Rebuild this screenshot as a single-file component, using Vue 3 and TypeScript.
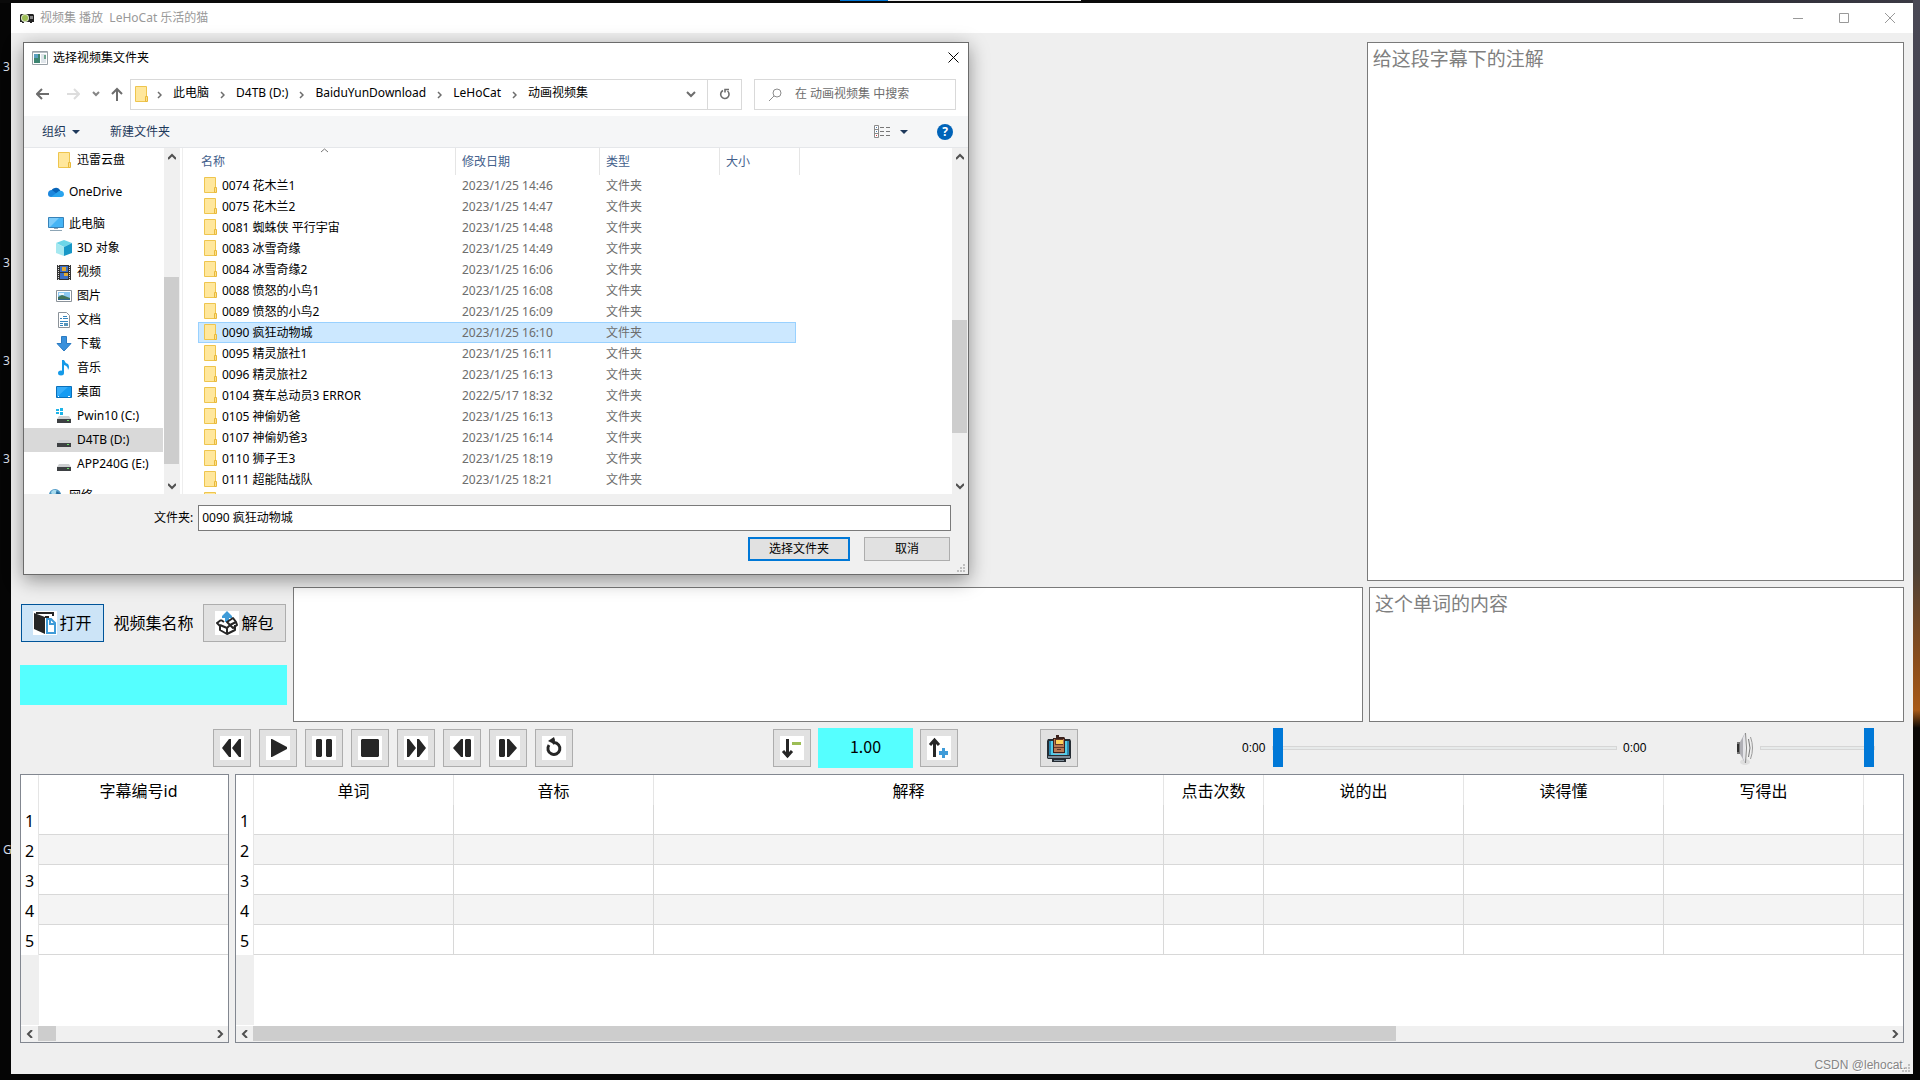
<script setup lang="ts">
import { ref } from 'vue'

interface Folder {
  name: string
  date: string
}
interface Place {
  label: string
  icon: string
  level: number
  gap?: boolean
}

const folders: Folder[] = [
  { name: '0074 花木兰1', date: '2023/1/25 14:46' },
  { name: '0075 花木兰2', date: '2023/1/25 14:47' },
  { name: '0081 蜘蛛侠 平行宇宙', date: '2023/1/25 14:48' },
  { name: '0083 冰雪奇缘', date: '2023/1/25 14:49' },
  { name: '0084 冰雪奇缘2', date: '2023/1/25 16:06' },
  { name: '0088 愤怒的小鸟1', date: '2023/1/25 16:08' },
  { name: '0089 愤怒的小鸟2', date: '2023/1/25 16:09' },
  { name: '0090 疯狂动物城', date: '2023/1/25 16:10' },
  { name: '0095 精灵旅社1', date: '2023/1/25 16:11' },
  { name: '0096 精灵旅社2', date: '2023/1/25 16:13' },
  { name: '0104 赛车总动员3 ERROR', date: '2022/5/17 18:32' },
  { name: '0105 神偷奶爸', date: '2023/1/25 16:13' },
  { name: '0107 神偷奶爸3', date: '2023/1/25 16:14' },
  { name: '0110 狮子王3', date: '2023/1/25 18:19' },
  { name: '0111 超能陆战队', date: '2023/1/25 18:21' },
]

const places: Place[] = [
  { label: '迅雷云盘', icon: 'folder', level: 2 },
  { label: 'OneDrive', icon: 'cloud', level: 1, gap: true },
  { label: '此电脑', icon: 'pc', level: 1, gap: true },
  { label: '3D 对象', icon: 'cube', level: 2 },
  { label: '视频', icon: 'film', level: 2 },
  { label: '图片', icon: 'picture', level: 2 },
  { label: '文档', icon: 'doc', level: 2 },
  { label: '下载', icon: 'download', level: 2 },
  { label: '音乐', icon: 'music', level: 2 },
  { label: '桌面', icon: 'desktop', level: 2 },
  { label: 'Pwin10 (C:)', icon: 'windrive', level: 2 },
  { label: 'D4TB (D:)', icon: 'drive', level: 2 },
  { label: 'APP240G (E:)', icon: 'drive', level: 2 },
  { label: '网络', icon: 'network', level: 1, gap: true },
]

const crumbs = ['此电脑', 'D4TB (D:)', 'BaiduYunDownload', 'LeHoCat', '动画视频集']

const transport = [
  { label: '快退', d: 'M2 12l7-9h2v18H9zM12 12l7-9h2v18h-2z' },
  { label: '播放', d: 'M5 3h1l15 8v2L6 21H5z' },
  { label: '暂停', d: 'M4 4l1-1h4l1 1v16l-1 1H5l-1-1zM14 4l1-1h4l1 1v16l-1 1h-4l-1-1z' },
  { label: '停止', d: 'M4 3h16l1 1v16l-1 1H4l-1-1V4z' },
  { label: '快进', d: 'M3 3h2l7 9-7 9H3zM13 3h2l7 9-7 9h-2z' },
  { label: '上一句', d: 'M3 12l8-9h2v18h-2zM15 4l1-1h4l1 1v16l-1 1h-4l-1-1z' },
  { label: '下一句', d: 'M3 4l1-1h4l1 1v16l-1 1H4l-1-1zM11 3h2l8 9-8 9h-2z' },
]

const wordColumns = ['单词', '音标', '解释', '点击次数', '说的出', '读得懂', '写得出', '']

const selected = ref('0090 疯狂动物城')
const note = ref('')
const subtitle = ref('')
const word = ref('')
const progress = ref(0)
const volume = ref(100)
</script>

<template>
  <div class="desktop">
    <span class="shortcut s1">3</span>
    <span class="shortcut s2">3</span>
    <span class="shortcut s3">3</span>
    <span class="shortcut s4">3</span>
    <span class="shortcut s5">G</span>
    <i class="peek"></i>

    <div class="window">
      <header class="titlebar">
        <svg class="app-icon" width="14" height="12" viewBox="0 0 14 12">
          <path fill="#222" d="M1 2h12l1 1v7h-2v1h-2v-1H4v1H2v-1H0V3z" />
          <circle cx="5" cy="6" r="4" fill="#dfe8cd" />
          <circle cx="5" cy="6" r="3" fill="#9cbd55" />
          <path fill="#888" d="M10 4h3v3h-3z" />
        </svg>
        <h1>视频集 播放&nbsp; LeHoCat 乐活的猫</h1>
        <button class="win-btn" aria-label="最小化">
          <svg width="10" height="10"><path d="M0 5.500h10" stroke="#999" /></svg>
        </button>
        <button class="win-btn" aria-label="最大化">
          <svg width="10" height="10"><path d="M.5.5h9v9h-9z" fill="none" stroke="#999" /></svg>
        </button>
        <button class="win-btn" aria-label="关闭">
          <svg width="10" height="10"><path d="M0 0l10 10M10 0L0 10" stroke="#999" /></svg>
        </button>
      </header>

      <main class="body">
        <section class="top">
          <div class="video"></div>
          <textarea v-model="note" class="box" aria-label="注解" placeholder="给这段字幕下的注解"></textarea>
        </section>

        <section class="middle">
          <div class="source">
            <div class="source-row">
              <button class="tool open">
                <svg class="chip" width="24" height="24" viewBox="0 0 24 24">
                  <path fill="#262626" d="M1 2l11 4v17L1 18z" />
                  <path fill="none" stroke="#262626" stroke-width="2" d="M3 2h17v3M12 6h4" />
                  <path fill="#fff" stroke="#3f9bd8" stroke-width="2" d="M14 22V8h4l4 4v10h-9M17 8v5h5" />
                </svg>
                打开
              </button>
              <span class="source-name">视频集名称</span>
              <button class="tool">
                <svg class="chip" width="24" height="24" viewBox="0 0 24 24">
                  <path fill="#3f9bd8" d="M12 0l5 5v2h-3v4h-4V7H7V5z" />
                  <path fill="none" stroke="#262626" stroke-width="2" stroke-linejoin="round" d="M6 9l-4 3 3 3v4l7 4 8-4v-5M5 14l7 3 3-3M12 17v6M6 9l3 2M15 14l6-3-3-4-6 4zM15 14l3 3 4-3-1-3" />
                </svg>
                解包
              </button>
            </div>
            <output class="source-output"></output>
          </div>
          <textarea v-model="subtitle" class="box" aria-label="字幕"></textarea>
          <textarea v-model="word" class="box" aria-label="单词" placeholder="这个单词的内容"></textarea>
        </section>

        <section class="controls">
          <div class="transport">
            <button v-for="t in transport" :key="t.label" class="tool square" :aria-label="t.label">
              <svg class="chip" width="24" height="24" viewBox="0 0 24 24"><path fill="#262626" :d="t.d" /></svg>
            </button>
            <button class="tool square" aria-label="重播">
              <svg class="chip" width="24" height="24" viewBox="0 0 24 24">
                <path fill="none" stroke="#262626" stroke-width="3" d="M12 6.500a6 6 0 1 1-5 2.500" />
                <path fill="#262626" d="M6 5l6-4 1 3-1 5-2-2z" />
              </svg>
            </button>
          </div>
          <div class="speed">
            <button class="tool square" aria-label="减速">
              <svg class="chip" width="24" height="24" viewBox="0 0 24 24">
                <path fill="none" stroke="#262626" stroke-width="3" d="M7.500 3v18M3 15l4.500 5 4.500-5" />
                <path fill="#9cbd55" d="M12 6h9v3h-9z" />
              </svg>
            </button>
            <output class="rate">1.00</output>
            <button class="tool square" aria-label="加速">
              <svg class="chip" width="24" height="24" viewBox="0 0 24 24">
                <path fill="none" stroke="#262626" stroke-width="3" d="M7.500 21V4M3 9l4.500-5L12 9" />
                <path fill="#3f9bd8" d="M15 12h3v3h3v4h-3v3h-3v-3h-3v-4h3z" />
              </svg>
            </button>
          </div>
          <button class="tool square tv" aria-label="投屏">
            <svg width="26" height="28" viewBox="0 0 26 28">
              <path fill="#252c33" d="M2 5h22l1 2v17l-1 1h-4v3H6v-3H2l-1-1V7z" />
              <path fill="#7c8b97" d="M2 22h22v2H2zM8 26h10v1H8z" />
              <path fill="#51cdea" d="M4 7h18v14H4z" />
              <path fill="#2d86ad" d="M3 7h2v14H3zM21 7h2v14h-2z" />
              <path fill="#3a211c" d="M10 1h3v2h5l1 1v15h-1v1H8v-1H7V4h3z" />
              <path fill="#b97952" d="M8 5h10v13H8z" />
              <path fill="#633826" d="M9 5h8v6H9zM8 13h10v1H8zM11 15h4v1h-4z" />
              <path fill="#ffd158" d="M10 6h7v4h-7z" />
              <path fill="#9aa9b5" d="M8 19h10v1H8z" />
            </svg>
          </button>
          <label class="time" for="progress">0:00</label>
          <input id="progress" v-model="progress" class="slider progress" type="range" min="0" max="100" />
          <span class="time end">0:00</span>
          <label class="speaker" for="volume" aria-label="音量">
            <svg width="18" height="36" viewBox="0 0 18 36">
              <ellipse cx="9" cy="32" rx="5" ry="3" fill="#dedede" />
              <path fill="#777" d="M1 12h4v12H1z" />
              <path fill="#303030" d="M1 14h2v8H1z" />
              <path fill="#b0b0b6" d="M4 12l5-9v30l-5-9z" />
              <path fill="#e4e4e8" d="M7 8l2-5v30l-2-5z" />
              <path fill="none" stroke="#888" d="M9.500 3q2 15 0 30" />
              <path fill="none" stroke="#777" d="M12.500 9q3 9 0 18" />
              <path fill="none" stroke="#9a9a9a" d="M14.500 7q4 11 0 22" />
            </svg>
          </label>
          <input id="volume" v-model="volume" class="slider volume" type="range" min="0" max="100" />
        </section>

        <section class="tables">
          <div class="grid-box ids">
            <div class="grid-view">
              <table class="grid">
                <colgroup><col class="c-num" /><col /></colgroup>
                <thead><tr><th></th><th>字幕编号id</th></tr></thead>
                <tbody>
                  <tr v-for="n in 5" :key="n"><th>{{ n }}</th><td></td></tr>
                </tbody>
              </table>
              <i class="gutter"></i>
            </div>
            <div class="hscroll">
              <button aria-label="向左"><svg width="8" height="8" viewBox="0 0 8 8"><path d="M6 0L2 4l4 4" /></svg></button>
              <div class="htrack"><i class="hthumb short"></i></div>
              <button aria-label="向右"><svg width="8" height="8" viewBox="0 0 8 8"><path d="M2 0l4 4-4 4" /></svg></button>
            </div>
          </div>
          <div class="grid-box words">
            <div class="grid-view">
              <table class="grid">
                <colgroup>
                  <col class="c-num" /><col class="c-mid" /><col class="c-mid" /><col />
                  <col class="c-small" /><col class="c-mid" /><col class="c-mid" /><col class="c-mid" /><col class="c-rest" />
                </colgroup>
                <thead><tr><th></th><th v-for="c in wordColumns" :key="c">{{ c }}</th></tr></thead>
                <tbody>
                  <tr v-for="n in 5" :key="n"><th>{{ n }}</th><td v-for="c in wordColumns" :key="c"></td></tr>
                </tbody>
              </table>
              <i class="gutter"></i>
            </div>
            <div class="hscroll">
              <button aria-label="向左"><svg width="8" height="8" viewBox="0 0 8 8"><path d="M6 0L2 4l4 4" /></svg></button>
              <div class="htrack"><i class="hthumb long"></i></div>
              <button aria-label="向右"><svg width="8" height="8" viewBox="0 0 8 8"><path d="M2 0l4 4-4 4" /></svg></button>
            </div>
          </div>
        </section>
      </main>

      <footer class="status">
        <span>CSDN @lehocat.</span>
        <i class="grip"></i>
      </footer>
    </div>

    <div class="dialog" role="dialog" aria-labelledby="dialog-title">
      <header class="dialog-title">
        <svg width="16" height="14" viewBox="0 0 16 14">
          <path fill="#fff" stroke="#98a0a6" d="M.5.5h15v13H.5z" />
          <path fill="#b9c0c6" d="M1 1h14v1H1z" />
          <path fill="#3d8571" d="M2 3h6v9H2z" />
          <path fill="#5a9fc0" d="M2 3h4v4H2z" />
          <path fill="#dfe5ea" d="M9 3h5v9H9z" />
          <path fill="#6da58e" d="M12 4h2v4h-2z" />
        </svg>
        <h2 id="dialog-title">选择视频集文件夹</h2>
        <button class="dialog-close" aria-label="关闭">
          <svg width="11" height="11"><path d="M.5.5l10 10M10.500.5l-10 10" stroke="#000" /></svg>
        </button>
      </header>

      <nav class="nav">
        <button class="nav-btn" aria-label="后退">
          <svg width="14" height="14" viewBox="0 0 14 14"><path d="M13 7H2M6 2L1 7l5 5" stroke="#6d6d6d" stroke-width="2" fill="none" /></svg>
        </button>
        <button class="nav-btn" aria-label="前进">
          <svg width="14" height="14" viewBox="0 0 14 14"><path d="M1 7h11M8 2l5 5-5 5" stroke="#ddd" stroke-width="2" fill="none" /></svg>
        </button>
        <button class="nav-btn recent" aria-label="最近位置">
          <svg width="8" height="6" viewBox="0 0 8 6"><path d="M1 1l3 3 3-3" stroke="#858585" stroke-width="2" fill="none" /></svg>
        </button>
        <button class="nav-btn up" aria-label="向上">
          <svg width="14" height="14" viewBox="0 0 14 14"><path d="M7 14V2M2 7l5-5 5 5" stroke="#6d6d6d" stroke-width="2" fill="none" /></svg>
        </button>
        <div class="address">
          <svg class="folder" width="14" height="17" viewBox="0 0 14 17">
            <path fill="#ffe79c" stroke="#eec54e" d="M.5.5h11v15H.5z" /><path fill="#ffe08a" stroke="#e8b93b" d="M10.500 10.500h2v5h-2z" />
          </svg>
          <template v-for="c in crumbs" :key="c">
            <svg class="crumb-sep" width="5" height="8" viewBox="0 0 5 8"><path d="M1 1l3 3-3 3" stroke="#6d6d6d" stroke-width="1.500" fill="none" /></svg>
            <a href="#">{{ c }}</a>
          </template>
          <button class="drop" aria-label="历史位置">
            <svg width="10" height="7" viewBox="0 0 10 7"><path d="M1 1l4 4 4-4" stroke="#6d6d6d" stroke-width="2" fill="none" /></svg>
          </button>
          <button class="refresh" aria-label="刷新">
            <svg width="12" height="12" viewBox="0 0 12 12"><path d="M4 2.500a4.200 4.200 0 1 0 4.500.5M6 4.500V1.500h4" stroke="#6d6d6d" stroke-width="1.600" fill="none" /></svg>
          </button>
        </div>
        <label class="search">
          <svg width="13" height="13" viewBox="0 0 13 13"><circle cx="8" cy="5" r="4" fill="none" stroke="#8c8c8c" /><path d="M5 8l-5 5" stroke="#8c8c8c" /></svg>
          <input type="text" aria-label="搜索" placeholder="在 动画视频集 中搜索" />
        </label>
      </nav>

      <div class="toolbar">
        <button class="menu">组织<i class="caret"></i></button>
        <button class="menu">新建文件夹</button>
        <button class="view" aria-label="更改视图">
          <svg width="17" height="13" viewBox="0 0 17 13">
            <path fill="#fff" stroke="#8a8a8a" d="M.5.5h4v12h-4zM.5 4.500h4M.5 8.500h4" />
            <path fill="#4d82b8" d="M2 2h1v1H2zM2 6h1v1H2z" /><path fill="#d33" d="M2 10h1v1H2z" />
            <path stroke="#777" d="M6 2.500h4M12 2.500h4M6 6.500h4M12 6.500h4M6 10.500h4M12 10.500h4" />
          </svg>
          <i class="caret"></i>
        </button>
        <button class="help" aria-label="帮助">?</button>
      </div>

      <div class="explorer">
        <ul class="places">
          <li v-for="p in places" :key="p.label" :class="{ gap: p.gap, deep: p.level === 2, active: p.label === 'D4TB (D:)' }">
            <svg width="16" height="16" viewBox="0 0 16 16">
              <g v-if="p.icon === 'folder'">
                <path fill="#ffe79c" stroke="#eec54e" d="M2.500.5h11v15h-11z" /><path fill="#ffe08a" stroke="#e8b93b" d="M12.500 10.500h2v5h-2z" />
              </g>
              <g v-else-if="p.icon === 'cloud'">
                <path fill="#0864b8" d="M3 8a5 5 0 0 1 9-2l1 3-9 3z" />
                <path fill="#1b86dd" d="M0 10q0-4 4-4l9 7H3q-3 0-3-3z" />
                <path fill="#29a4ee" d="M3 13l8-6q4-1 5 3 0 3-3 3z" />
              </g>
              <g v-else-if="p.icon === 'pc'">
                <path fill="#45b4f5" stroke="#3782b8" d="M.5 1.500h15v10H.5z" /><path fill="#7dccfa" d="M1 2h10l-9 9H1z" />
                <path fill="#8da5b5" d="M6 12h4v1H6zM2 14h12v1H2z" />
              </g>
              <g v-else-if="p.icon === 'cube'">
                <path fill="#6cd6e8" d="M8 0l8 3-8 4-8-4z" /><path fill="#a5e8f0" d="M0 3l8 4v9l-8-3z" /><path fill="#1797c7" d="M16 3L8 7v9l8-3z" />
              </g>
              <g v-else-if="p.icon === 'film'">
                <path fill="#333" d="M1 1h14v15H1z" /><path fill="#3c6fc4" d="M4 2h8v6H4zM4 9h8v6H4z" /><path fill="#e1aa35" d="M6 3h4v4H6zM8 9h4v3H8z" />
                <path stroke="#ddd" stroke-dasharray="1 1" d="M2.500 1v15M13.500 1v15" />
              </g>
              <g v-else-if="p.icon === 'picture'">
                <path fill="#fff" stroke="#8b9299" d="M.5 2.500h15v11H.5z" /><path fill="#8cc8f2" d="M2 4h12v8H2z" /><path fill="#e9f5fc" d="M3 5h5v2H3z" />
                <path fill="#42745b" d="M2 9l4-2 8 3v2H2z" /><path fill="#2f6590" d="M2 11h12v1H2z" />
              </g>
              <g v-else-if="p.icon === 'doc'">
                <path fill="#fff" stroke="#8b9299" d="M2.500.5h8l3 3v12h-11z" /><path stroke="#3785bd" d="M7 4.500h4M4 6.500h2M7 6.500h5M4 9.500h8M4 11.500h3M4 13.500h3" /><path fill="#5795ba" d="M8 11h4v3H8z" />
              </g>
              <path v-else-if="p.icon === 'download'" fill="#3a91dc" stroke="#2b7ac2" d="M5.500.5h5v7h4.500L8 15 1 7.500h4.500z" />
              <g v-else-if="p.icon === 'music'">
                <ellipse cx="5" cy="13" rx="3" ry="2.500" fill="#159ae8" /><path fill="#159ae8" d="M6 0h2q1 3 4 4 2 3 0 6 0-4-4-5v8H6z" />
              </g>
              <g v-else-if="p.icon === 'desktop'">
                <path fill="#159bf2" stroke="#0a70ba" d="M.5 2.500h15v11H.5z" /><path fill="#36adfa" d="M1 3h11L2 12H1z" /><path fill="#fff" d="M2 12h1v1H2zM12 12h2v1h-2z" />
              </g>
              <g v-else-if="p.icon === 'network'">
                <circle cx="7" cy="7" r="6" fill="#4b96c4" /><path fill="#a9dcef" d="M3 4q3-4 6-1-1 4-5 4z" /><path fill="#246b9b" d="M8 3l5 3-4 3z" />
              </g>
              <g v-else>
                <path fill="#cdcfd1" d="M3 8h10l2 3H1z" /><path fill="#3d4043" d="M1 11h14v4H1z" /><path fill="#68e066" d="M11 12h2v1h-2z" />
                <path v-if="p.icon === 'windrive'" fill="#1db4e8" d="M0 1h3v2H0zM4 0h3v3H4zM0 4h3v2H0zM4 4h3v3H4z" />
              </g>
            </svg>
            <span>{{ p.label }}</span>
          </li>
        </ul>
        <div class="vscroll left">
          <button aria-label="向上滚动"><svg width="8" height="8" viewBox="0 0 8 8"><path d="M0 6l4-4 4 4" /></svg></button>
          <i class="vthumb"></i>
          <button aria-label="向下滚动"><svg width="8" height="8" viewBox="0 0 8 8"><path d="M0 2l4 4 4-4" /></svg></button>
        </div>
        <div class="files">
          <table>
            <colgroup><col class="f-name" /><col class="f-date" /><col class="f-type" /><col /></colgroup>
            <thead>
              <tr>
                <th class="sorted">
                  名称
                  <svg width="9" height="5" viewBox="0 0 9 5"><path d="M1 4l3.500-3L8 4" stroke="#777" fill="none" /></svg>
                </th>
                <th>修改日期</th><th>类型</th><th class="last">大小</th>
              </tr>
            </thead>
            <tbody>
              <tr v-for="f in folders" :key="f.name" :class="{ active: f.name === selected }" @click="selected = f.name">
                <td>
                  <span class="file-name">
                    <svg class="folder" width="14" height="17" viewBox="0 0 14 17">
                      <path fill="#ffe79c" stroke="#eec54e" d="M.5.5h11v15H.5z" /><path fill="#ffe08a" stroke="#e8b93b" d="M10.500 10.500h2v5h-2z" />
                    </svg>
                    {{ f.name }}
                  </span>
                </td>
                <td>{{ f.date }}</td>
                <td>文件夹</td>
                <td></td>
              </tr>
              <tr>
                <td>
                  <span class="file-name">
                    <svg class="folder" width="14" height="17" viewBox="0 0 14 17"><path fill="#ffe79c" stroke="#eec54e" d="M.5.5h11v15H.5z" /></svg>
                  </span>
                </td>
                <td></td><td></td><td></td>
              </tr>
            </tbody>
          </table>
        </div>
        <div class="vscroll right">
          <button aria-label="向上滚动"><svg width="8" height="8" viewBox="0 0 8 8"><path d="M0 6l4-4 4 4" /></svg></button>
          <i class="vthumb"></i>
          <button aria-label="向下滚动"><svg width="8" height="8" viewBox="0 0 8 8"><path d="M0 2l4 4 4-4" /></svg></button>
        </div>
      </div>

      <footer class="dialog-foot">
        <div class="foot-row">
          <label for="folder-name">文件夹:</label>
          <input id="folder-name" v-model="selected" type="text" />
        </div>
        <div class="foot-row actions">
          <button class="primary">选择文件夹</button>
          <button class="cancel">取消</button>
        </div>
        <i class="grip"></i>
      </footer>
    </div>
  </div>
</template>

<style>
body {
  margin: 0;
  background: #050505;
}
</style>

<style scoped>
* {
  box-sizing: border-box;
}
button,
input,
textarea {
  font: inherit;
  color: inherit;
  margin: 0;
  padding: 0;
  border: 0;
  border-radius: 0;
  background: none;
  outline: none;
}
h1,
h2,
ul {
  margin: 0;
  padding: 0;
  font-size: inherit;
  font-weight: normal;
  list-style: none;
}
svg {
  display: block;
  flex: none;
}
table {
  border-collapse: separate;
  border-spacing: 0;
  table-layout: fixed;
}
th,
td {
  padding: 0;
  font-weight: normal;
}

.desktop {
  position: relative;
  display: flex;
  min-height: 100vh;
  padding: 3px 7px 6px 11px;
  overflow: hidden;
  font: 12px/16px 'Noto Sans', 'Noto Sans CJK SC', sans-serif;
  color: #000;
  background:
    linear-gradient(#4a4956 0, #3c3a46 300px, #4e4136 570px, #8a4d1c 660px, #a85a18 710px, #0b0806 728px, #050505 100%) right / 7px 100% no-repeat,
    linear-gradient(90deg, #0a0a0a 60%, #3b3a45) top / 100% 3px no-repeat,
    #050505;
}
.shortcut {
  position: absolute;
  left: 3px;
  color: #d5dbe5;
}
.s1 { top: 59px; }
.s2 { top: 255px; }
.s3 { top: 353px; }
.s4 { top: 451px; }
.s5 { top: 842px; }
.peek {
  position: absolute;
  top: 0;
  left: 840px;
  width: 241px;
  height: 1px;
  background: linear-gradient(90deg, #0078d7 48px, #eee 48px);
}

.window {
  display: flex;
  flex: 1;
  flex-direction: column;
  min-width: 0;
  background: #efefef;
}
.titlebar {
  display: flex;
  align-items: center;
  height: 30px;
  padding-left: 9px;
  color: #999;
  background: #fff;
}
.titlebar h1 {
  flex: 1;
  margin-left: 6px;
}
.win-btn {
  display: grid;
  place-items: center;
  width: 46px;
  height: 28px;
}
.body {
  display: flex;
  flex: 1;
  flex-direction: column;
  gap: 6px;
  padding: 9px 9px 0;
}
.top {
  display: grid;
  flex: 1;
  grid-template-columns: 5fr 2fr;
  gap: 4px;
  min-height: 0;
}
.box {
  display: block;
  min-width: 0;
  padding: 4px 5px;
  border: 1px solid #7a7a7a;
  background: #fff;
  font-size: 19px;
  line-height: 24px;
  resize: none;
}
.box::placeholder {
  color: #808080;
}
.middle {
  display: grid;
  grid-template-columns: 267px 2fr 1fr;
  gap: 6px;
  height: 135px;
}
.source {
  padding-top: 17px;
}
.source-row {
  display: flex;
  align-items: center;
  justify-content: space-between;
  padding: 0 1px;
  font-size: 16px;
}
.source-output {
  display: block;
  height: 40px;
  margin-top: 23px;
  background: #55ffff;
}
.tool {
  display: flex;
  flex: none;
  align-items: center;
  justify-content: center;
  gap: 2px;
  width: 83px;
  height: 38px;
  border: 1px solid #adadad;
  background: #e1e1e1;
}
.tool.open {
  border-color: #005499;
  background: #cce4f7;
}
.tool.square {
  width: 38px;
}
.chip {
  background: #fff;
}
.controls {
  display: flex;
  align-items: center;
  height: 40px;
}
.transport {
  display: flex;
  gap: 8px;
  margin-left: 193px;
}
.speed {
  display: flex;
  align-items: center;
  gap: 7px;
  margin-left: 200px;
}
.rate {
  width: 95px;
  height: 40px;
  font-size: 16px;
  font-family: 'Noto Sans CJK SC', sans-serif;
  line-height: 36px;
  text-align: center;
  background: #55ffff;
}
.tv {
  margin-left: 82px;
}
.time {
  width: 30px;
  margin-left: 164px;
  font-family: 'Liberation Sans', sans-serif;
}
.time.end {
  width: 26px;
  margin-left: 6px;
}
.slider {
  appearance: none;
  height: 40px;
}
.slider::-webkit-slider-runnable-track {
  height: 4px;
  border: 1px solid #d6d6d6;
  background: #e7eaea;
}
.slider::-webkit-slider-thumb {
  appearance: none;
  width: 10px;
  height: 39px;
  margin-top: -19px;
  background: #0078d7;
}
.progress {
  flex: 1;
  min-width: 0;
}
.speaker {
  margin-left: 87px;
}
.volume {
  width: 115px;
  margin: 0 29px 0 6px;
}

.tables {
  display: flex;
  gap: 6px;
  height: 269px;
}
.grid-box {
  display: flex;
  flex-direction: column;
  border: 1px solid #828790;
  background: #fff;
  font-size: 16px;
}
.ids {
  flex: none;
  width: 209px;
}
.words {
  flex: 1;
  min-width: 0;
}
.grid-view {
  display: flex;
  flex: 1;
  flex-direction: column;
}
.grid {
  width: 100%;
}
.c-num { width: 18px; }
.c-mid { width: 200px; }
.c-small { width: 100px; }
.c-rest { width: 39px; }
.grid tr {
  height: 30px;
}
.grid th {
  padding-top: 1px;
  border-right: 1px solid #e5e5e5;
  line-height: 20px;
}
.ids thead th:last-child {
  padding-left: 10px;
}
.grid td {
  border-right: 1px solid #d8d8d8;
  border-bottom: 1px solid #d8d8d8;
}
.grid tr > :last-child {
  border-right: 0;
}
.grid tbody tr:nth-child(even) td {
  background: #f4f4f4;
}
.gutter {
  flex: 1;
  width: 18px;
  background: #efefef;
}
.hscroll {
  display: flex;
  height: 16px;
  margin-top: 1px;
  background: #f0f0f0;
}
.hscroll button,
.vscroll button {
  display: grid;
  flex: none;
  place-items: center;
  width: 17px;
  height: 17px;
}
.hscroll button {
  height: 15px;
}
.vscroll button {
  width: 16px;
}
.hscroll svg,
.vscroll svg {
  fill: none;
  stroke: #505050;
  stroke-width: 2;
}
.htrack {
  flex: 1;
}
.hthumb {
  display: block;
  height: 15px;
  background: #cdcdcd;
}
.hthumb.short { width: 18px; }
.hthumb.long { width: 70%; }

.status {
  position: relative;
  height: 31px;
}
.status span {
  position: absolute;
  right: 7px;
  bottom: 1px;
  font: 12px/16px 'Liberation Sans', sans-serif;
  color: #858585;
  text-shadow: 1px 1px 0 #fff;
}
.grip {
  position: absolute;
  right: 3px;
  bottom: 2px;
  width: 8px;
  height: 8px;
  background:
    linear-gradient(#bfbfbf, #bfbfbf) 6px 0 / 2px 2px no-repeat,
    linear-gradient(#bfbfbf, #bfbfbf) 3px 3px / 2px 2px no-repeat,
    linear-gradient(#bfbfbf, #bfbfbf) 6px 3px / 2px 2px no-repeat,
    linear-gradient(#bfbfbf, #bfbfbf) 0 6px / 2px 2px no-repeat,
    linear-gradient(#bfbfbf, #bfbfbf) 3px 6px / 2px 2px no-repeat,
    linear-gradient(#bfbfbf, #bfbfbf) 6px 6px / 2px 2px no-repeat;
}

.dialog {
  position: absolute;
  top: 42px;
  left: 23px;
  width: 946px;
  border: 1px solid #6b6b6b;
  background: #fff;
  box-shadow: 0 5px 18px rgba(0, 0, 0, 0.4);
}
.dialog-title {
  display: flex;
  align-items: center;
  height: 29px;
  padding-left: 8px;
}
.dialog-title h2 {
  flex: 1;
  margin-left: 5px;
}
.dialog-close {
  display: grid;
  place-items: center;
  width: 30px;
  height: 29px;
}
.nav {
  display: flex;
  align-items: center;
  height: 44px;
  padding: 0 12px 0 4px;
}
.nav-btn {
  display: grid;
  flex: none;
  place-items: center;
  width: 30px;
  height: 30px;
}
.nav-btn.recent {
  width: 16px;
}
.nav-btn.up {
  width: 26px;
}
.address {
  display: flex;
  flex: 1;
  align-items: center;
  height: 31px;
  padding-left: 4px;
  border: 1px solid #d9d9d9;
}
.crumb-sep {
  margin: 2px 11px 0;
}
.address .folder + .crumb-sep {
  margin-left: 8px;
}
.address a {
  padding-bottom: 2px;
  color: #000;
  text-decoration: none;
}
.drop {
  display: grid;
  place-items: center;
  width: 32px;
  height: 29px;
  margin-left: auto;
}
.refresh {
  display: grid;
  place-items: center;
  width: 34px;
  height: 29px;
  border-left: 1px solid #d9d9d9;
}
.search {
  display: flex;
  align-items: center;
  width: 202px;
  height: 31px;
  margin-left: 12px;
  padding-left: 14px;
  border: 1px solid #d9d9d9;
}
.search input {
  flex: 1;
  min-width: 0;
  margin-left: 13px;
}
.search input::placeholder {
  color: #6d6d6d;
}
.toolbar {
  display: flex;
  align-items: center;
  height: 32px;
  padding: 0 15px 0 18px;
  border-bottom: 1px solid #e5e7ea;
  background: #f5f6f7;
  color: #1e395b;
}
.menu {
  display: flex;
  align-items: center;
  margin-right: 30px;
}
.caret {
  width: 0;
  margin-left: 6px;
  border: 4px solid transparent;
  border-top-color: #1e395b;
  border-bottom: 0;
}
.view {
  display: flex;
  align-items: center;
  margin-left: auto;
}
.view .caret {
  margin-left: 9px;
}
.help {
  width: 16px;
  height: 16px;
  margin-left: 29px;
  border-radius: 50%;
  background: #0063b8;
  color: #fff;
  font-weight: bold;
  line-height: 16px;
}
.explorer {
  display: flex;
  height: 346px;
  overflow: hidden;
}
.places {
  width: 140px;
  height: 346px;
  overflow: hidden;
}
.places li {
  display: flex;
  align-items: center;
  gap: 5px;
  height: 24px;
  margin-right: 1px;
  padding-left: 24px;
  white-space: nowrap;
}
.places li.deep {
  padding-left: 32px;
}
.places li.gap {
  margin-top: 8px;
}
.places li.active {
  background: #d9d9d9;
}
.vscroll {
  display: flex;
  flex: none;
  flex-direction: column;
  width: 16px;
  background: #f0f0f0;
}
.vthumb {
  width: 15px;
  margin-bottom: auto;
  background: #cdcdcd;
}
.vscroll.left .vthumb {
  height: 187px;
  margin-top: 112px;
}
.vscroll.right .vthumb {
  height: 113px;
  margin-top: 155px;
}
.files {
  flex: 1;
  min-width: 0;
  height: 346px;
  margin-left: 2px;
  padding-left: 15px;
  border-left: 1px solid #eee;
  overflow: hidden;
}
.files table {
  width: 598px;
}
.f-name { width: 258px; }
.f-date { width: 144px; }
.f-type { width: 120px; }
.files thead tr {
  height: 27px;
}
.files th {
  position: relative;
  padding-left: 6px;
  border-right: 1px solid #e5e5e5;
  color: #43608c;
  text-align: left;
}
.files th.sorted {
  padding-left: 3px;
}
.files th.last {
  border-right: 0;
}
.files th.last::after {
  content: '';
  position: absolute;
  top: 0;
  right: -4px;
  bottom: 0;
  border-right: 1px solid #e5e5e5;
}
.sorted svg {
  position: absolute;
  top: 0;
  right: 126px;
}
.files tbody tr {
  height: 21px;
}
.files td {
  padding-left: 6px;
  color: #6d6d6d;
  line-height: 19px;
  white-space: nowrap;
}
.file-name {
  display: flex;
  align-items: center;
  gap: 4px;
  height: 19px;
  color: #000;
}
.files tr.active td {
  background: #cce8ff;
  box-shadow: inset 0 1px #99d1ff, inset 0 -1px #99d1ff;
}
.files tr.active td:first-child {
  box-shadow: inset 0 1px #99d1ff, inset 0 -1px #99d1ff, inset 1px 0 #99d1ff;
}
.files tr.active td:last-child {
  box-shadow: inset 0 1px #99d1ff, inset 0 -1px #99d1ff, inset -1px 0 #99d1ff;
}
.dialog-foot {
  position: relative;
  height: 80px;
  padding: 11px 17px 0 130px;
  background: #f0f0f0;
}
.foot-row {
  display: flex;
  align-items: center;
}
.foot-row input {
  flex: 1;
  height: 26px;
  margin-left: 5px;
  padding: 0 3px 2px;
  border: 1px solid #7a7a7a;
  background: #fff;
}
.actions {
  justify-content: flex-end;
  gap: 14px;
  margin-top: 6px;
  padding-right: 1px;
}
.primary,
.cancel {
  width: 86px;
  height: 24px;
  border: 1px solid #adadad;
  background: #e1e1e1;
}
.primary {
  width: 102px;
  border: 2px solid #0078d7;
}
</style>
